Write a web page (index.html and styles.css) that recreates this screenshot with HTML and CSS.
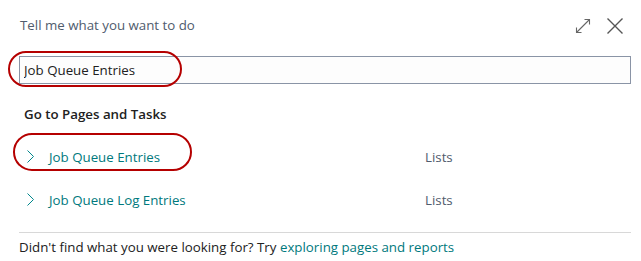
FILE: index.html
```html
<!DOCTYPE html>
<html lang="en">
<head>
    <meta charset="UTF-8">
    <title>Tell me what you want to do</title>
    <link rel="stylesheet" href="styles.css">
</head>
<body>
    <div class="dialog">
        <div class="header">
            <span class="title">Tell me what you want to do</span>
            <div class="tools">
                <svg width="16" height="16" viewBox="0 0 16 16" fill="none" stroke="#666" stroke-width="1.1">
                    <path d="M1.5 14.5 L14.5 1.5 M9.5 1.5 H14.5 V6.5 M1.5 9.5 V14.5 H6.5"/>
                </svg>
                <svg width="16" height="16" viewBox="0 0 16 16" fill="none" stroke="#555" stroke-width="1.4">
                    <path d="M0.5 0.5 L15.5 15.5 M15.5 0.5 L0.5 15.5"/>
                </svg>
            </div>
        </div>

        <div class="search">
            <input type="text" value="Job Queue Entries">
            <span class="mark mark-input"></span>
        </div>

        <h2>Go to Pages and Tasks</h2>

        <ul class="results">
            <li>
                <svg class="chev" width="7" height="13" viewBox="0 0 7 13" fill="none" stroke="#00868b" stroke-width="1">
                    <path d="M0.5 0.5 L6.5 6.5 L0.5 12.5"/>
                </svg>
                <a href="#">Job Queue Entries</a>
                <span class="cat">Lists</span>
                <span class="mark mark-row"></span>
            </li>
            <li>
                <svg class="chev" width="7" height="13" viewBox="0 0 7 13" fill="none" stroke="#00868b" stroke-width="1">
                    <path d="M0.5 0.5 L6.5 6.5 L0.5 12.5"/>
                </svg>
                <a href="#">Job Queue Log Entries</a>
                <span class="cat">Lists</span>
            </li>
        </ul>

        <div class="footer">
            Didn't find what you were looking for? Try <a href="#">exploring pages and reports</a>
        </div>
    </div>
</body>
</html>
```

FILE: styles.css
```css
body {
    margin: 0;
    background: white;
    font-family: "Open Sans", "Noto Sans", Arial, sans-serif;
    color: #212121;
}
.dialog {
    width: 641px;
    height: 261px;
    padding: 0 10px 0 19px;
    box-sizing: border-box;
}
.header {
    display: flex;
    justify-content: space-between;
    align-items: center;
    height: 50px;
}
.title {
    font-size: 13.3px;
    color: #505c6d;
    margin-left: 1px;
}
.tools {
    display: flex;
    gap: 16px;
    margin-right: 8px;
    margin-top: 2px;
}
.search {
    position: relative;
    margin-top: 6px;
}
.search input {
    width: 100%;
    height: 28px;
    box-sizing: border-box;
    border: 1px solid #8a94a6;
    padding: 0 4px;
    font-family: inherit;
    font-size: 13.3px;
    color: #212121;
    background: #fdfdfd;
    outline: none;
}
.mark {
    position: absolute;
    border: 2.5px solid #b50000;
    border-radius: 20px;
    pointer-events: none;
}
.mark-input {
    left: -11px;
    top: -5px;
    width: 170px;
    height: 32px;
}
h2 {
    font-size: 13.3px;
    font-weight: 600;
    margin: 21px 0 0 5px;
    height: 20px;
}
.results {
    list-style: none;
    margin: 10px 0 0 0;
    padding: 0;
}
.results li {
    position: relative;
    display: flex;
    align-items: center;
    height: 43px;
    font-size: 13.3px;
}
.chev {
    margin: 0 15px 0 8px;
    flex-shrink: 0;
}
.results a {
    color: #00797d;
    text-decoration: none;
    width: 376px;
}
.cat {
    color: #505c6d;
}
.mark-row {
    left: -6px;
    top: -2px;
    width: 175px;
    height: 34px;
}
.footer {
    border-top: 1px solid #d8d8d8;
    margin-top: 11px;
    padding-top: 5px;
    font-size: 13.3px;
    color: #212121;
}
.footer a {
    color: #00797d;
    text-decoration: none;
}
```
